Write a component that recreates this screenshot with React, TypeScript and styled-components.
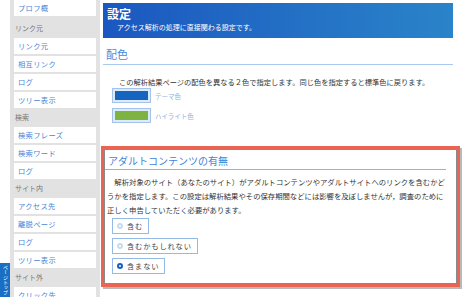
import { styled, createGlobalStyle } from "styled-components";

const GlobalStyle = createGlobalStyle`
  html, body {
    margin: 0;
    padding: 0;
    background: #fff;
    font-family: "Noto Sans CJK JP", "Noto Sans", sans-serif;
    overflow: hidden;
  }
`;

const menu = [
  { items: ["プロフ概"] },
  { title: "リンク元", items: ["リンク元", "相互リンク", "ログ", "ツリー表示"] },
  { title: "検索", items: ["検索フレーズ", "検索ワード", "ログ"] },
  { title: "サイト内", items: ["アクセス先", "離脱ページ", "ログ", "ツリー表示"] },
  { title: "サイト外", items: ["クリック先"] },
];

const options = [
  { label: "含む", checked: false },
  { label: "含むかもしれない", checked: false },
  { label: "含まない", checked: true },
];

export default function App() {
  return (
    <Page>
      <GlobalStyle />
      <Sidebar>
        {menu.map((g, i) => (
          <Group key={i}>
            {g.title && <GroupTitle>{g.title}</GroupTitle>}
            {g.items.map((it, j) => (
              <MenuItem key={j}>{it}</MenuItem>
            ))}
          </Group>
        ))}
      </Sidebar>
      <Main>
        <Banner>
          <h1>設定</h1>
          <p>アクセス解析の処理に直接関わる設定です。</p>
        </Banner>
        <Heading>配色</Heading>
        <Text>この解析結果ページの配色を異なる２色で指定します。同じ色を指定すると標準色に戻ります。</Text>
        <Swatches>
          <SwatchRow>
            <Swatch $color="#1565c0" />
            <SwatchLabel>テーマ色</SwatchLabel>
          </SwatchRow>
          <SwatchRow>
            <Swatch $color="#7cb342" />
            <SwatchLabel>ハイライト色</SwatchLabel>
          </SwatchRow>
        </Swatches>
        <Highlight>
          <SectionHeading>アダルトコンテンツの有無</SectionHeading>
          <SectionText>
            解析対象のサイト（あなたのサイト）がアダルトコンテンツやアダルトサイトへのリンクを含むかどうかを指定します。この設定は解析結果やその保存期間などには影響を及ぼしませんが，調査のために正しく申告していただく必要があります。
          </SectionText>
          <Options>
            {options.map((o) => (
              <Option key={o.label}>
                <Radio $checked={o.checked} />
                {o.label}
              </Option>
            ))}
          </Options>
        </Highlight>
      </Main>
      <TopTab>ページトップ</TopTab>
    </Page>
  );
}

const Page = styled.div`
  display: flex;
  align-items: flex-start;
  width: 470px;
  height: 297px;
  padding-left: 10px;
  box-sizing: border-box;
  gap: 3px;
  position: relative;
`;

const Sidebar = styled.nav`
  width: 90px;
  height: 297px;
  background: #e2e2e2;
  padding: 0 4px;
  box-sizing: border-box;
  display: flex;
  flex-direction: column;
  overflow: hidden;
  & > div:first-child {
    margin-bottom: 3px;
  }
`;

const Group = styled.div`
  display: flex;
  flex-direction: column;
  gap: 2px;
`;

const GroupTitle = styled.div`
  height: 17px;
  line-height: 19px;
  font-size: 7px;
  color: #777;
  padding-left: 1px;
`;

const MenuItem = styled.div`
  height: 16px;
  flex-shrink: 0;
  line-height: 16px;
  background: #fff;
  color: #4a86d8;
  font-size: 7.3px;
  padding-left: 4px;
  letter-spacing: 0.3px;
`;

const Main = styled.main`
  width: 350px;
  padding-top: 3px;
  display: flex;
  flex-direction: column;
`;

const Banner = styled.header`
  height: 35px;
  background: linear-gradient(90deg, #1b57c0 0%, #2a84c9 100%);
  color: #fff;
  padding: 3px 4px;
  box-sizing: border-box;
  h1 {
    margin: 0;
    font-size: 12px;
    line-height: 16px;
    font-weight: 700;
  }
  p {
    margin: 0;
    padding-left: 10px;
    font-size: 7px;
    line-height: 11px;
  }
`;

const Heading = styled.h2`
  margin: 10px 0 0;
  padding: 0 3px 3px;
  font-size: 11px;
  line-height: 13px;
  font-weight: 400;
  color: #4a8ad8;
  border-bottom: 1.5px solid #a9c9ef;
`;

const Text = styled.p`
  margin: 12px 0 0;
  padding-left: 16px;
  font-size: 7.25px;
  line-height: 10px;
  color: #333;
`;

const Swatches = styled.div`
  display: flex;
  flex-direction: column;
  gap: 5px;
  padding-left: 9px;
  margin-top: 1px;
`;

const SwatchRow = styled.div`
  display: flex;
  align-items: center;
  gap: 4px;
`;

const Swatch = styled.div<{ $color: string }>`
  width: 33px;
  height: 9px;
  border: 1px solid #a3c3ea;
  padding: 2px;
  background-clip: content-box;
  background-color: ${(p) => p.$color};
  box-shadow: inset 0 0 0 2px #dfe9f7;
`;

const SwatchLabel = styled.span`
  font-size: 6.5px;
  color: #8fb0de;
`;

const Highlight = styled.section`
  margin: 23px 0 0 -2px;
  width: 359px;
  height: 141px;
  box-sizing: border-box;
  border: 3px solid #ea6453;
  box-shadow: inset 0 0 0 1px #8a8a8a, 2px 2px 0 #b9b9b9;
  padding: 1px 9px 0 3px;
  display: flex;
  flex-direction: column;
`;

const SectionHeading = styled.h3`
  margin: 0 2px 0 -2px;
  padding: 5px 3px 2px;
  font-size: 10px;
  line-height: 12px;
  font-weight: 400;
  color: #3f83d6;
  border-bottom: 1px solid #8cb6e8;
`;

const SectionText = styled.p`
  margin: 5px 0 0;
  font-size: 7.35px;
  line-height: 14px;
  color: #333;
  text-indent: 1em;
`;

const Options = styled.div`
  display: flex;
  flex-direction: column;
  align-items: flex-start;
  gap: 4px;
  margin-top: 1px;
  padding-left: 5px;
`;

const Option = styled.label`
  display: flex;
  align-items: center;
  gap: 4px;
  height: 14px;
  padding: 0 5px 0 4px;
  border: 1px solid #94bbe8;
  font-size: 7.3px;
  letter-spacing: 0.8px;
  color: #444;
`;

const Radio = styled.span<{ $checked: boolean }>`
  width: 6px;
  height: 6px;
  border-radius: 50%;
  box-sizing: border-box;
  background: #fff;
  border: ${(p) => (p.$checked ? "2px solid #1560bd" : "2px solid #c9dbf1")};
`;

const TopTab = styled.div`
  position: absolute;
  left: 0;
  bottom: 0;
  width: 10px;
  height: 34px;
  background: #1a6fc4;
  color: #fff;
  font-size: 5px;
  line-height: 10px;
  writing-mode: vertical-rl;
  text-align: center;
  overflow: hidden;
`;
